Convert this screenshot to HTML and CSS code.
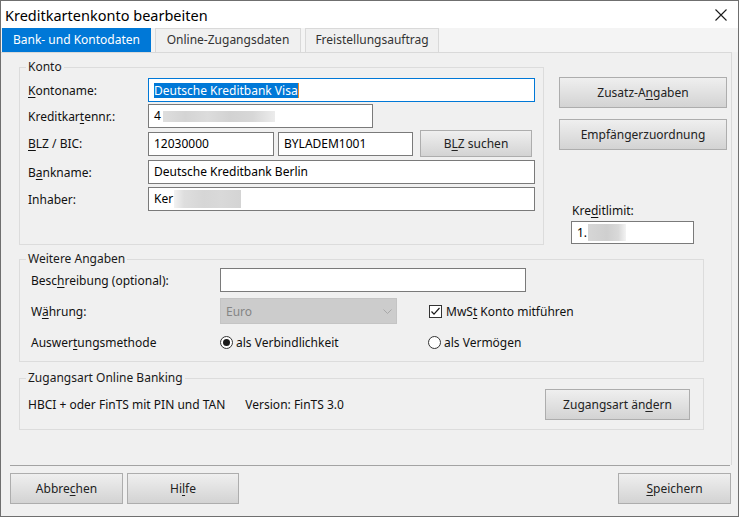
FILE: index.html
```html
<!DOCTYPE html>
<html lang="de">
<head>
<meta charset="utf-8">
<title>Kreditkartenkonto bearbeiten</title>
<link rel="stylesheet" href="styles.css">
</head>
<body>
<div class="window">
  <div class="titlebar">
    <span class="title">Kreditkartenkonto bearbeiten</span>
    <svg class="close" width="12" height="12" viewBox="0 0 12 12"><path d="M0.5 0.5 L11.5 11.5 M11.5 0.5 L0.5 11.5" stroke="#1a1a1a" stroke-width="1.1" fill="none"/></svg>
  </div>
  <div class="tabs">
    <div class="tab active t1">Bank- und Kontodaten</div>
    <div class="tab t2">Online-Zugangsdaten</div>
    <div class="tab t3">Freistellungsauftrag</div>
  </div>
  <div class="panel">
    <div class="toprow">
      <fieldset class="group konto">
        <legend class="cap">Konto</legend>
        <div class="row r1">
          <span class="lbl"><u>K</u>ontoname:</span>
          <div class="input focus w-full"><span class="sel">Deutsche Kreditbank Visa</span><span class="caret"></span></div>
        </div>
        <div class="row r2">
          <span class="lbl">Kreditkar<u>t</u>ennr.:</span>
          <div class="input w-card">4<span class="blur b-card"></span></div>
        </div>
        <div class="row r3">
          <span class="lbl"><u>B</u>LZ / BIC:</span>
          <div class="input w-blz">12030000</div>
          <div class="input w-bic">BYLADEM1001</div>
          <div class="btn b-blz">B<u>L</u>Z suchen</div>
        </div>
        <div class="row r4">
          <span class="lbl">B<u>a</u>nkname:</span>
          <div class="input w-full">Deutsche Kreditbank Berlin</div>
        </div>
        <div class="row r5">
          <span class="lbl">Inhaber:</span>
          <div class="input w-full">Ker<span class="blur b-name"></span></div>
        </div>
      </fieldset>
      <div class="side">
        <div class="btn b-side">Zusatz-A<u>n</u>gaben</div>
        <div class="btn b-side b-side2">Empfängerzuordnung</div>
        <div class="limit-lbl">Kre<u>d</u>itlimit:</div>
        <div class="input limit">1.<span class="blur b-limit"></span></div>
      </div>
    </div>

    <fieldset class="group weitere">
      <legend class="cap">Weitere Angaben</legend>
      <div class="wrow w1">
        <span class="wlbl">Besc<u>h</u>reibung (optional):</span>
        <div class="input w-desc"></div>
      </div>
      <div class="wrow w2">
        <span class="wlbl">W<u>ä</u>hrung:</span>
        <div class="select">
          <span>Euro</span>
          <svg class="chev" width="9" height="5" viewBox="0 0 9 5"><path d="M0.5 0.5 L4.5 4.5 L8.5 0.5" stroke="#a8a8a8" stroke-width="1" fill="none"/></svg>
        </div>
        <div class="check">
          <span class="cbox"><svg width="11" height="11" viewBox="0 0 11 11"><path d="M1.5 5.5 L4 8.2 L9.5 2" stroke="#1a1a1a" stroke-width="1.2" fill="none"/></svg></span>
          <span>MwS<u>t</u> Konto mitführen</span>
        </div>
      </div>
      <div class="wrow w3">
        <span class="wlbl">Auswer<u>t</u>ungsmethode</span>
        <div class="radio r-first"><span class="rbtn on"></span><span>als Verbindlichkeit</span></div>
        <div class="radio"><span class="rbtn"></span><span>als Vermögen</span></div>
      </div>
    </fieldset>

    <fieldset class="group zugang">
      <legend class="cap">Zugangsart Online Banking</legend>
      <div class="zrow">
        <span class="ztext">HBCI + oder FinTS mit PIN und TAN<span class="ver">Version: FinTS 3.0</span></span>
        <div class="btn b-zug">Zugangsart än<u>d</u>ern</div>
      </div>
    </fieldset>
  </div>
  <div class="footer">
    <div class="sep"></div>
    <div class="btnrow">
      <div class="btn b-foot">Abbre<u>c</u>hen</div>
      <div class="btn b-foot b-help">Hi<u>l</u>fe</div>
      <div class="btn b-foot b-save"><u>S</u>peichern</div>
    </div>
  </div>
</div>
</body>
</html>
```
FILE: styles.css
```css
html, body {
  margin: 0;
  padding: 0;
  background: #ffffff;
}
body {
  font-family: "Noto Sans", "Segoe UI", "Liberation Sans", sans-serif;
  font-size: 12px;
  color: #111;
}
u { text-decoration-thickness: 1px; text-underline-offset: 2px; }

.window {
  width: 739px;
  height: 517px;
  box-sizing: border-box;
  border: 1px solid #6f6f6f;
  background: #f0f0f0;
  display: flex;
  flex-direction: column;
}

.titlebar {
  height: 27px;
  flex: none;
  background: #ffffff;
  display: flex;
  align-items: center;
  justify-content: space-between;
  padding: 0 11px 0 4px;
}
.title { font-size: 14.5px; color: #000; line-height: 20px; }
.close { display: block; }

.tabs {
  height: 24px;
  flex: none;
  display: flex;
  gap: 4px;
  padding-left: 1px;
  background: #f4f4f4;
}
.tab {
  box-sizing: border-box;
  height: 24px;
  line-height: 22px;
  text-align: center;
  color: #333;
  border: 1px solid #d9d9d9;
  border-bottom: none;
  background: #f0f0f0;
}
.tab.active {
  background: #0078d7;
  border-color: #0078d7;
  color: #ffffff;
}
.t1 { width: 149px; }
.t2 { width: 146px; }
.t3 { width: 134px; }

.panel {
  width: 731px;
  height: 413px;
  box-sizing: border-box;
  flex: none;
  border-top: 1px solid #d9d9d9;
  border-right: 1px solid #d9d9d9;
  padding: 6px 0 0 18px;
}

.toprow { display: flex; align-items: flex-start; }

fieldset.group {
  margin: 0;
  padding: 0 8px;
  border: 1px solid #dcdcdc;
  min-width: 0;
  box-sizing: border-box;
}
legend.cap {
  padding: 0 2px;
  margin-left: -2px;
  line-height: 16px;
  color: #1a1a1a;
}

fieldset.konto { width: 525px; padding-bottom: 33px; }

.row { display: flex; align-items: center; height: 24px; }
.r1 { margin-top: 3px; }
.r2 { margin-top: 2px; }
.r3 { margin-top: 2px; height: 27px; }
.r4 { margin-top: 3px; }
.r5 { margin-top: 3px; }
.lbl { width: 120px; flex: none; }

.input {
  box-sizing: border-box;
  height: 24px;
  border: 1px solid #7a7a7a;
  background: #ffffff;
  padding: 0 5px;
  line-height: 22px;
  white-space: nowrap;
  overflow: hidden;
  display: flex;
  align-items: center;
  color: #000;
}
.input.focus { border-color: #0078d7; }
.sel { background: #0078d7; color: #fff; line-height: 15px; }
.caret { width: 1px; height: 15px; background: #f08a24; }
.w-full { width: 387px; }
.w-card { width: 225px; }
.w-blz { width: 126px; }
.w-bic { width: 135px; margin-left: 4px; }

.blur { display: inline-block; }
.b-card {
  width: 112px; height: 11px; margin-left: 2px;
  background: linear-gradient(90deg, #dedede 0%, #d4d4d4 20%, #dcdcdc 40%, #d2d2d2 60%, #d7d7d7 80%, #ececec 100%);
}
.b-name {
  width: 67px; height: 18px; margin-left: 1px;
  background: linear-gradient(90deg, #f2f2f2 0%, #dedede 15%, #d6d6d6 45%, #d9d9d9 70%, #d4d4d4 100%);
}
.b-limit {
  width: 38px; height: 17px; margin-left: 1px;
  background: linear-gradient(90deg, #d6d6d6 0%, #cfcfcf 50%, #d9d9d9 80%, #f3f3f3 100%);
}

.btn {
  box-sizing: border-box;
  border: 1px solid #adadad;
  background: linear-gradient(to bottom, #efefef, #d3d3d3);
  color: #222;
  text-align: center;
  display: flex;
  align-items: center;
  justify-content: center;
  white-space: nowrap;
}
.b-blz { width: 112px; height: 27px; margin-left: 7px; }

.side { width: 168px; margin-left: 15px; padding-top: 18px; }
.b-side { height: 31px; }
.b-side2 { margin-top: 11px; }
.limit-lbl { margin: 53px 0 0 13px; line-height: 16px; }
.limit { width: 123px; height: 23px; margin: 2px 0 0 12px; }

fieldset.weitere { width: 685px; margin-top: 6px; padding-bottom: 7px; }
.wrow { display: flex; align-items: center; padding-left: 3px; }
.w1 { margin-top: 1px; height: 24px; }
.w2 { margin-top: 6px; height: 26px; }
.w3 { margin-top: 6px; height: 24px; }
.wlbl { width: 189px; flex: none; }
.w-desc { width: 306px; }

.select {
  box-sizing: border-box;
  width: 177px;
  height: 26px;
  background: #cccccc;
  border: 1px solid #c4c4c4;
  color: #858585;
  display: flex;
  align-items: center;
  justify-content: space-between;
  padding: 0 4px 0 5px;
}
.chev { display: block; }

.check { display: flex; align-items: center; margin-left: 32px; gap: 4px; }
.cbox {
  box-sizing: border-box;
  width: 13px; height: 13px;
  border: 1px solid #333;
  background: #fff;
  display: flex;
  align-items: center;
  justify-content: center;
}
.cbox svg { display: block; }

.radio { display: flex; align-items: center; gap: 3px; }
.r-first { width: 208px; }
.rbtn {
  box-sizing: border-box;
  width: 13px; height: 13px;
  border: 1px solid #333;
  border-radius: 50%;
  background: #fff;
  display: flex;
  align-items: center;
  justify-content: center;
}
.rbtn.on::after {
  content: "";
  width: 7px; height: 7px;
  border-radius: 50%;
  background: #1a1a1a;
}

fieldset.zugang { width: 685px; margin-top: 8px; padding: 0 13px 9px 8px; }
.zrow { display: flex; align-items: center; justify-content: space-between; margin-top: 3px; }
.ztext { white-space: nowrap; }
.ver { margin-left: 20px; }
.b-zug { width: 145px; height: 31px; }

.footer { flex: none; }
.sep { height: 1px; background: #a3a3a3; margin: 0 8px 0 9px; }
.btnrow { display: flex; margin-top: 7px; padding: 0 7px 0 9px; }
.b-foot { width: 113px; height: 31px; }
.b-help { width: 112px; margin-left: 4px; }
.b-save { margin-left: auto; }
```
